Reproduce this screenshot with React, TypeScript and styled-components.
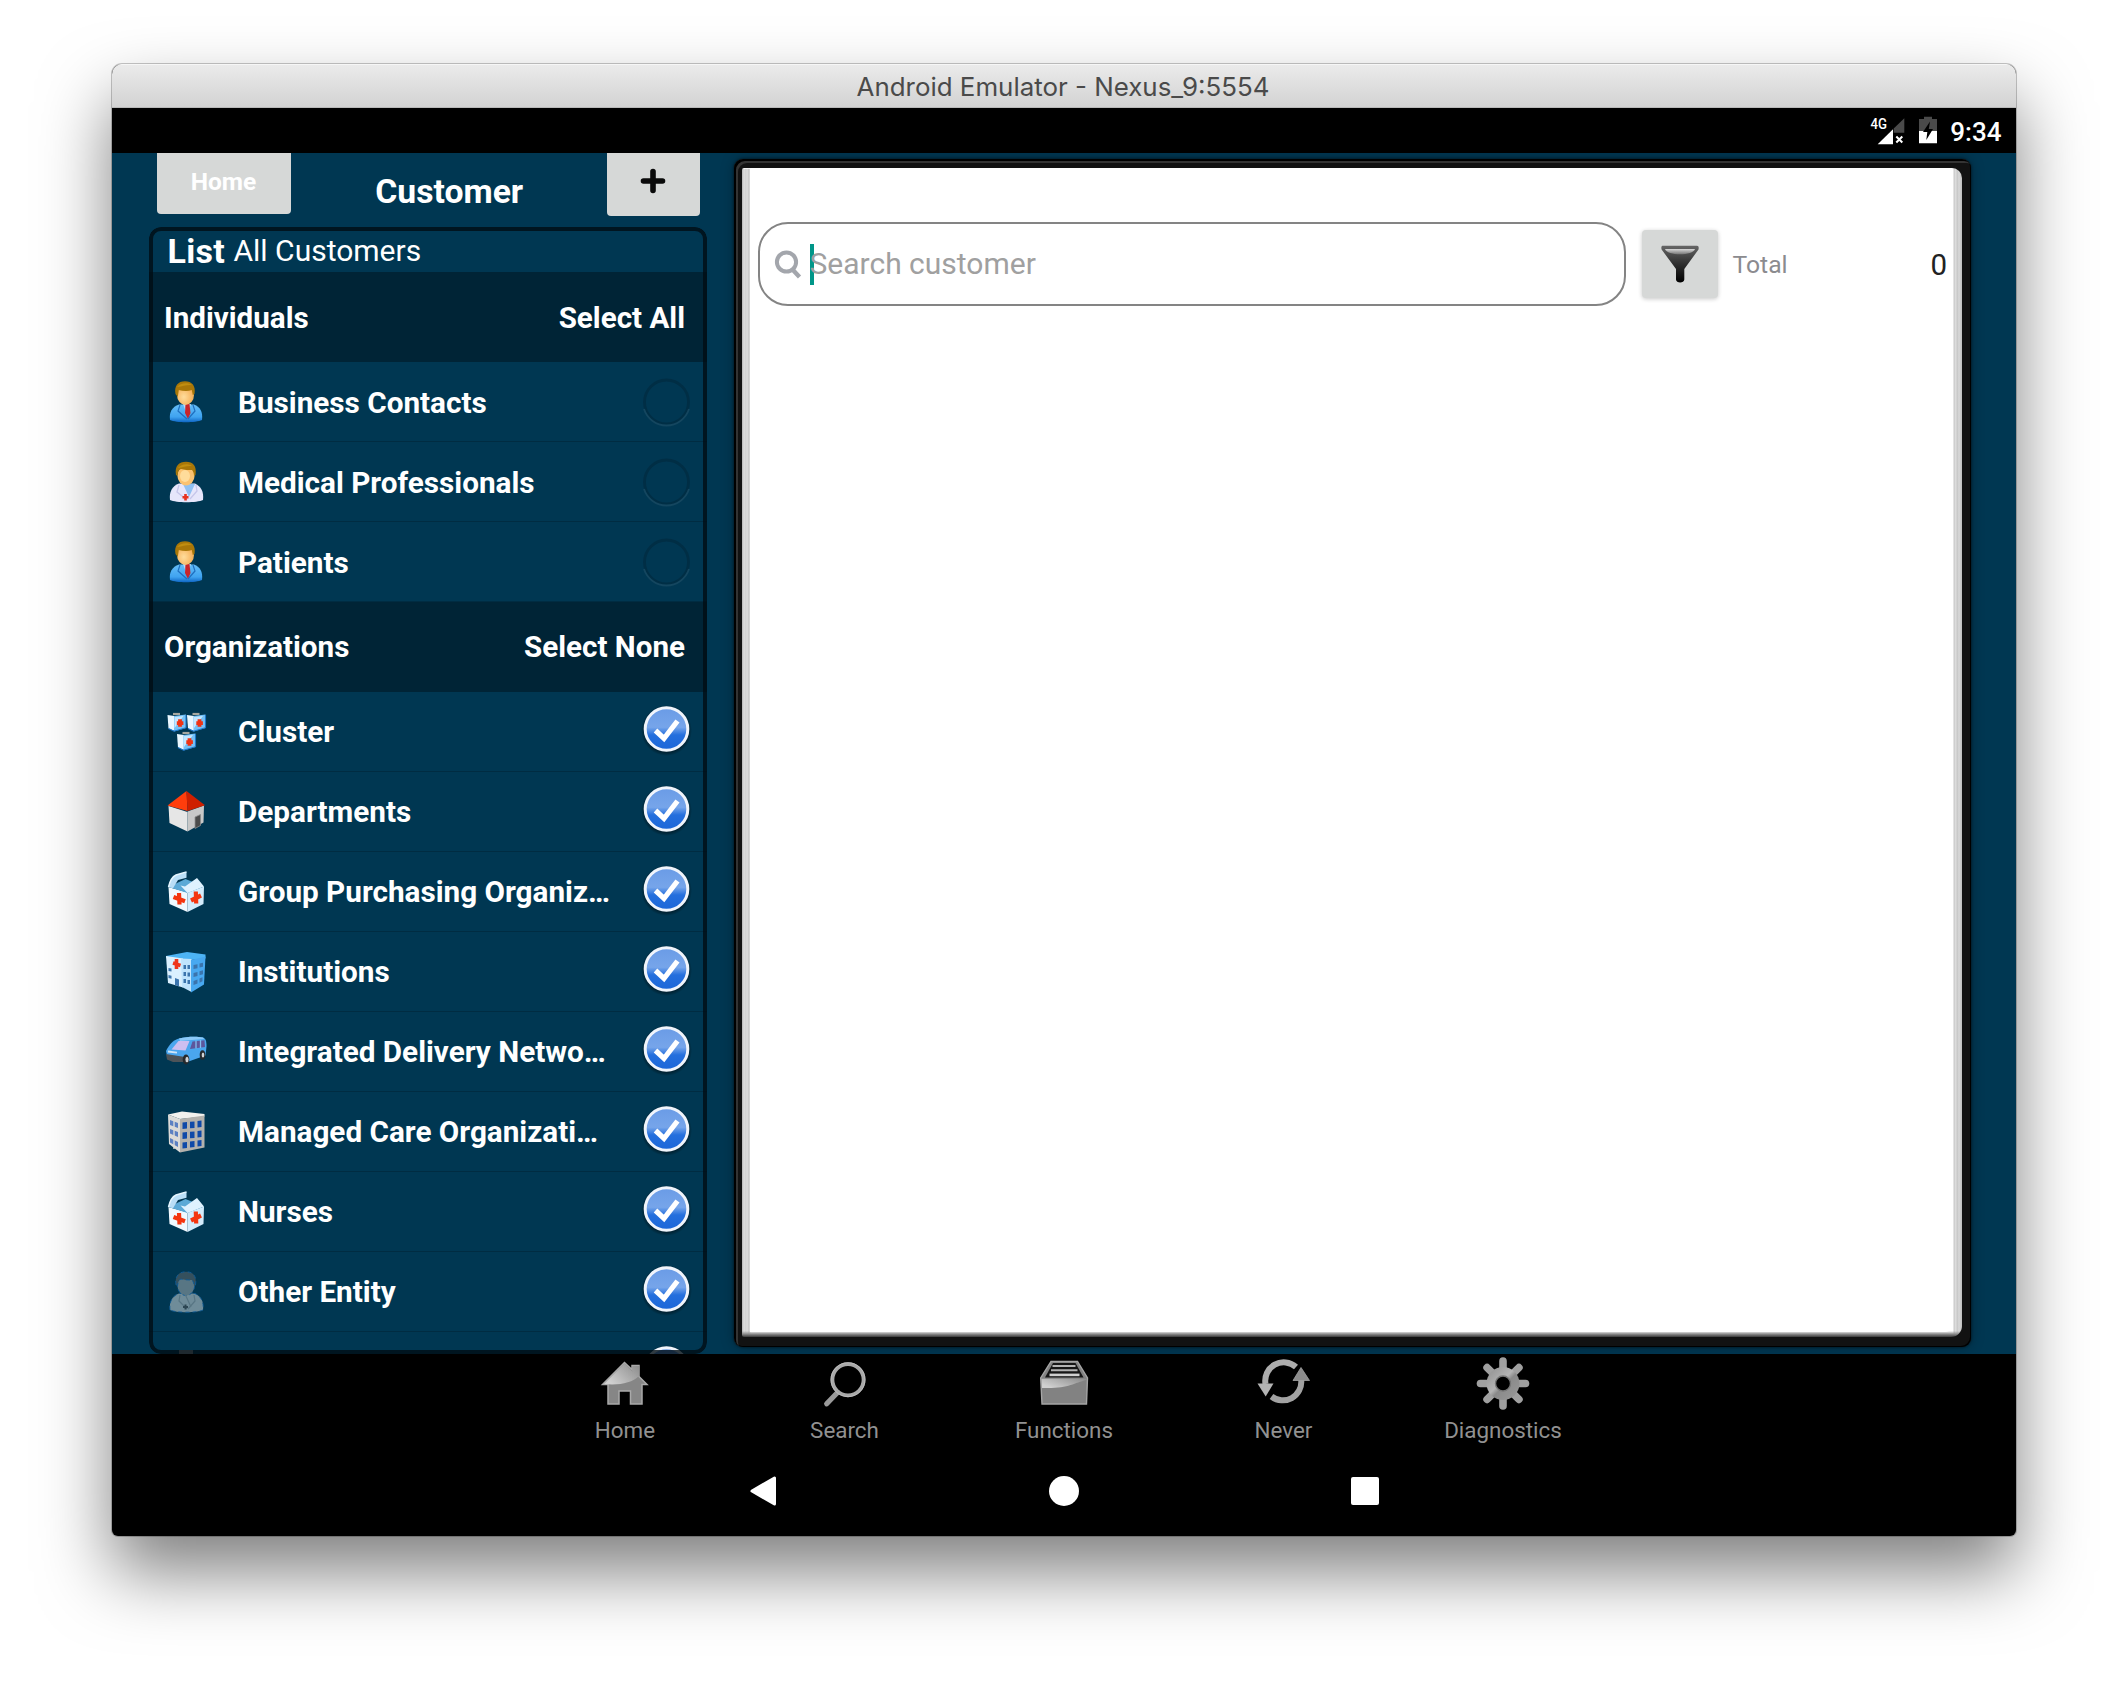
import React from 'react';
import styled, { createGlobalStyle } from 'styled-components';

const GlobalStyle = createGlobalStyle`
  *, *::before, *::after { box-sizing: border-box; }
  body { margin: 0; background: #fff; font-family: Roboto, "Liberation Sans", sans-serif; }
  button { font: inherit; border: 0; padding: 0; margin: 0; background: none; color: inherit; }
  svg { display: block; flex: none; overflow: visible; }
`;

const Desktop = styled.div`
  height: 1696px;
  padding: 64px 112px 0;
  overflow: hidden;
`;

const EmulatorWindow = styled.div`
  display: flex;
  flex-direction: column;
  height: 1472px;
  border-radius: 10px 10px 6px 6px;
  overflow: hidden;
  background: #000;
  box-shadow: 0 0 0 1px rgba(0, 0, 0, 0.22), 0 36px 70px rgba(0, 0, 0, 0.5);
`;

const TitleBar = styled.header`
  flex: none;
  height: 44px;
  padding-right: 2px;
  text-align: center;
  font: 400 25.9px/45px Inter, "Liberation Sans", sans-serif;
  color: #4a4a4a;
  background: linear-gradient(#ebebeb, #d2d2d2);
  box-shadow: inset 0 1px 0 #f6f6f6, inset 0 -1px 0 #b9b9b9;
`;

const StatusBar = styled.div`
  flex: none;
  display: flex;
  justify-content: flex-end;
  height: 45px;
  padding: 0 14.5px 0 0;
  color: #fff;
`;

const Clock = styled.span`
  margin-left: 13px;
  font-weight: 500;
  font-size: 26px;
  line-height: 48px;
`;

const StatusIcon = styled.div<{ gap: number }>`
  padding-top: 7px;
  margin-left: ${p => p.gap}px;
`;

const AppBody = styled.main`
  flex: none;
  display: flex;
  height: 1201px;
  background: #003752;
`;

const Sidebar = styled.aside`
  display: flex;
  flex-direction: column;
  width: 595px;
  padding-left: 37px;
`;

const SidebarHeader = styled.div`
  flex: none;
  display: flex;
  justify-content: space-between;
  align-items: flex-start;
  height: 74px;
  padding: 0 7px 0 7.5px;
`;

const HomeButton = styled.button`
  width: 134px;
  height: 61px;
  border-radius: 0 0 4px 4px;
  background: #d6d8d7;
  color: #fff;
  font-weight: 700;
  font-size: 24.5px;
  line-height: 57px;
  padding-bottom: 4px;
`;

const AddButton = styled.button`
  display: flex;
  justify-content: center;
  width: 93.5px;
  height: 63px;
  padding-top: 15px;
  border-radius: 0 0 4px 4px;
  background: #d6d8d7;
`;

const SidebarTitle = styled.h1`
  margin: 0;
  padding-left: 1.5px;
  color: #fff;
  font-weight: 700;
  font-size: 33.7px;
  line-height: 77px;
`;

const ListPanel = styled.section`
  position: relative;
  flex: 1;
  min-height: 0;
  overflow: hidden;
  border-radius: 12px;
  color: #fff;
  &::after {
    content: '';
    position: absolute;
    inset: 0;
    border: 4px solid rgba(0, 12, 20, 0.8);
    border-radius: 12px;
  }
`;

const ListCaption = styled.div`
  display: flex;
  align-items: flex-start;
  height: 45px;
  padding-left: 18.5px;
`;

const CaptionLabel = styled.strong`
  width: 66px;
  font-weight: 700;
  font-size: 34px;
  line-height: 49px;
  letter-spacing: 0.3px;
`;

const CaptionValue = styled.span`
  font-size: 30px;
  line-height: 48px;
`;

const GroupHeader = styled.div<{ nudge?: number }>`
  display: flex;
  justify-content: space-between;
  height: 90px;
  padding: ${p => p.nudge || 0}px 22px 0 15px;
  background: #002436;
  font-weight: 700;
  font-size: 29.6px;
  line-height: 90px;
`;

const Row = styled.div`
  display: flex;
  height: 80px;
  padding: 0 14px 0 16px;
  border-bottom: 1px solid #002c42;
`;

const RowIcon = styled.div`
  flex: none;
  width: 73px;
  padding-top: 19px;
`;

const RowLabel = styled.span<{ nudge?: number }>`
  flex: none;
  width: 388px;
  padding-top: ${p => p.nudge || 0}px;
  font-weight: 700;
  font-size: 29.7px;
  line-height: 80px;
  white-space: nowrap;
  overflow: hidden;
  text-overflow: ellipsis;
`;

const RowMark = styled.div`
  margin-left: auto;
  padding-top: 10px;
`;

const Notebook = styled.section`
  display: flex;
  width: 1237px;
  height: 1188px;
  margin: 6px 0 0 27px;
  padding: 9px 9px 10px 8px;
  border-radius: 9px;
  background: #121212;
  box-shadow: inset 2px 2px 0 #000, inset 4px 4px 0 #343434, inset -1px -1px 0 #000,
    0 0 3px rgba(0, 0, 0, 0.7), 0 0 14px rgba(0, 0, 0, 0.28);
`;

const PageStack = styled.div`
  flex: 1;
  display: flex;
  padding: 1px 9px 5px 8px;
  border-radius: 2px 10px 11px 2px;
  background:
    linear-gradient(rgba(255,255,255,0.7), rgba(255,255,255,0.7) 1px, transparent 1px),
    linear-gradient(to top, #3a3a3a, #8d8d8d 3px, transparent 6px),
    linear-gradient(90deg, #b5b5b5 0, #dedede 2px, #d0d0d0 4px, #e0e0e0 5px, #c4c4c4 7px, #e6e6e6 8px, #fff 9px,
      #fff 1211px, #c9c9c9 1212px, #e2e2e2 1214px, #c4c4c4 1215px, #d9d9d9 1217px, #bdbdbd 1220px);
`;

const Page = styled.div`
  flex: 1;
  padding: 53px 6px 0 7.5px;
  border-radius: 0 8px 8px 0;
  background: #fff;
`;

const SearchRow = styled.div`
  display: flex;
  align-items: center;
`;

const SearchBox = styled.div`
  flex: none;
  display: flex;
  align-items: center;
  width: 868px;
  height: 84px;
  padding-left: 14px;
  border: 2px solid #848484;
  border-radius: 30px;
  font-size: 30px;
  line-height: 35px;
  color: #a0a0a0;
`;

const Placeholder = styled.span`
  padding-bottom: 1px;
`;

const Caret = styled.i`
  width: 4px;
  height: 41px;
  margin: 0 -4px 0 7px;
  background: #009688;
`;

const FilterButton = styled.button`
  flex: none;
  display: flex;
  align-items: center;
  justify-content: center;
  width: 76px;
  height: 68px;
  margin: 0 14.5px 0 16.5px;
  border-radius: 4px;
  background: #d6d8d7;
  box-shadow: 0 1px 4px rgba(0, 0, 0, 0.22);
`;

const TotalLabel = styled.span`
  font-size: 24.7px;
  color: #8b8b8f;
`;

const TotalValue = styled.span`
  margin-left: auto;
  padding-top: 1px;
  font-size: 29.5px;
  color: #222;
`;

const TabBar = styled.nav`
  flex: none;
  display: grid;
  grid-template-columns: repeat(5, 219.5px);
  justify-content: center;
  height: 92px;
  padding-top: 2px;
`;

const Tab = styled.div`
  display: flex;
  flex-direction: column;
  align-items: center;
  gap: 5px;
  color: #919191;
  font-size: 22.4px;
  line-height: 26px;
`;

const SystemNav = styled.nav`
  flex: none;
  display: grid;
  grid-template-columns: repeat(3, 301px);
  justify-content: center;
  justify-items: center;
  align-items: center;
  height: 90px;
`;

/* ---------- list icons ---------- */

const Svg42 = ({ children }: { children: React.ReactNode }) => (
  <svg width="42" height="42" viewBox="0 0 42 42">{children}</svg>
);

const PersonIcon = () => (
  <Svg42>
    <defs>
      <linearGradient id="suit" x1="0" y1="0" x2="0" y2="1"><stop offset="0" stopColor="#64bdf8" /><stop offset=".7" stopColor="#3fa3f0" /><stop offset="1" stopColor="#0f66c4" /></linearGradient>
      <radialGradient id="face" cx=".4" cy=".6" r=".7"><stop offset="0" stopColor="#ffdc9b" /><stop offset="1" stopColor="#f3a548" /></radialGradient>
    </defs>
    <path d="M5 39C4 31 7 26 14 23.500h15c6 2.500 9 7 8 15.500c-6 3-26 3-32 0z" fill="url(#suit)" />
    <path d="M18 23l4 11 4-11z" fill="#b5dcfa" />
    <path d="M20.500 23h4l1 9-2.500 6-3-6z" fill="#c9252b" />
    <path d="M15 24l-2 6 9 8M28 24l2 6-7 8" fill="none" stroke="#1f6fc0" strokeWidth="1.200" />
    <ellipse cx="20.500" cy="14" rx="8.500" ry="10" fill="url(#face)" />
    <path d="M10.500 13C9 5 13 .3 20 .3S31 5 29.500 13l-1.700 1-1-5c-4 1.500-9 1-13 0l-1 7z" fill="#a87708" />
    <path d="M12 6c3-4 11-5 15-2-5-.5-9 1-15 2z" fill="#c08e10" />
  </Svg42>
);

const DoctorIcon = () => (
  <Svg42>
    <path d="M5 39C4 31 7 25 14 22.500h16c6 3 9 8 8 16.500c-6 3-27 3-33 0z" fill="#e6e6fb" />
    <path d="M18 23l6 13 6-13z" fill="#8fc0f2" />
    <path d="M14 24l-2 7 10 8M31 24l1 6-7 8" fill="none" stroke="#c6c6ea" strokeWidth="1.300" />
    <path d="M20.500 33v6.500M17.500 36.300h6" stroke="#e8331f" strokeWidth="2.600" />
    <ellipse cx="21" cy="14.500" rx="8.600" ry="10" fill="#fbc270" />
    <ellipse cx="20" cy="15" rx="5" ry="6" fill="#ffdc9b" />
    <path d="M11 14C9.500 5 14 .8 21 .8S32 5 30.500 14l-1.500 1c0-3-1-5-2-6-3 0-8 0-11-1-3 1-3 4-3.500 7z" fill="#a87708" />
    <path d="M13 7c3-4 10-5 14-2-5-.5-9 1-14 2z" fill="#c08e10" />
  </Svg42>
);

const EntityIcon = () => (
  <Svg42>
    <g stroke="#0d5a96" strokeWidth=".9" strokeDasharray="4 3">
      <path d="M5 39C4 31 7 25 14 22.500h16c6 3 9 8 8 16.500c-6 3-27 3-33 0z" fill="#6f8c99" />
      <ellipse cx="21" cy="14.500" rx="8.600" ry="10" fill="#587684" />
      <path d="M11 14C9.500 5 14 .8 21 .8S32 5 30.500 14l-1.500 1c0-3-1-5-2-6-3 0-8 0-11-1-3 1-3 4-3.500 7z" fill="#35505d" />
    </g>
    <path d="M15 24l-1 6 8 8M29 24l1 6-7 8M20 23l6 13" fill="none" stroke="#587684" strokeWidth="1.200" />
    <path d="M20.500 33.500v5M18 36h5" stroke="#2c4653" strokeWidth="2" />
  </Svg42>
);

const KitBox = ({ x, y }: { x: number; y: number }) => (
  <g transform={`translate(${x} ${y})`}>
    <path d="M6 1.500h7" stroke="#a8a8a0" strokeWidth="2.200" />
    <path d="M.5 2.500l7 1v15l-6-2.500z" fill="#eaf7ff" />
    <path d="M7 3.500l12-1.500v13.500l-12 3.500z" fill="#74c0f6" />
    <path d="M1.500 16l5.500 2.700 12-3.500V2.500" fill="none" stroke="#1c77cc" strokeWidth="1.100" />
    <path d="M7.500 4.500l9-1-9 12z" fill="#c4e7ff" />
    <path d="M13 6.800v7.400M9.800 10.700h6.600" stroke="#f03314" strokeWidth="3.800" />
  </g>
);

const ClusterIcon = () => (
  <Svg42>
    <KitBox x={2} y={1.500} />
    <KitBox x={21.500} y={1.500} />
    <KitBox x={11.500} y={20.500} />
  </Svg42>
);

const HouseIcon = () => (
  <Svg42>
    <path d="M3.500 15l19 6v19.500L4.500 32z" fill="#e6e6e6" />
    <path d="M22.500 20.500L39 14.500l-.5 17-16 9z" fill="#c8c8c8" />
    <path d="M30 26l5.500-2.500v11L30 37.500z" fill="#4b4b4b" stroke="#8d8d8d" strokeWidth=".8" />
    <path d="M21.500 0L2.500 14.500l20 5.500z" fill="#ff3d0c" />
    <path d="M21.500 0L40 14.300 22.500 20z" fill="#cf1f00" />
  </Svg42>
);

const FirstAidIcon = () => (
  <Svg42>
    <path d="M3.500 16l19 5.500v19.500L4.500 33z" fill="#f0f9ff" />
    <path d="M22.500 21.500L39 15.500l-.5 17.500-16 8z" fill="#d3ecfc" />
    <path d="M3.500 16l17-8 18.500 7.500L22.500 22z" fill="#5ba9d6" />
    <path d="M3.500 16C5 9 8 5.500 11 4L21.500.8v6L13 9l-5 8.200z" fill="#b9def6" />
    <path d="M3.500 16C5 9 8 5.500 11 4L21.500.8" fill="none" stroke="#e6f6ff" strokeWidth="1.400" />
    <path d="M15.500 14.500L20 15.500 32 7l7 8.500L22.500 22z" fill="#dff2ff" />
    <path d="M14 22l.5 11.500M8.500 26l11.500 4.200" stroke="#f4350f" strokeWidth="4.200" />
    <path d="M30.800 20.500l.4 12M26 29.500l10-5" stroke="#f4350f" strokeWidth="4.200" />
  </Svg42>
);

const HospitalIcon = () => (
  <Svg42>
    <path d="M1 5l21-4 18.500 2.500v4L26 9 1 7z" fill="#4db4f5" />
    <path d="M1 5l17 2.500v29L3 32z" fill="#daf0ff" />
    <path d="M16 7.500l10.500.5v33L17 36z" fill="#c0e4fd" />
    <path d="M26 9l14.500-3.500L39 33.500 26 41.500z" fill="#48a8f0" />
    <path d="M11.500 8v10M8 12l7.500 2.500" stroke="#ee351c" strokeWidth="3.600" />
    <g fill="#3b74ad">
      <path d="M3.500 17l3 .5v3l-3-.5zM3.500 24l3 .8v3l-3-.8zM10 27l4 1.500v7l-4-1.500z" />
      <path d="M18.500 14h2.500v4h-2.500zM22.500 14h2.500v4h-2.500zM18.500 21h2.500v4h-2.500zM22.500 21.500h2.500v4h-2.500zM18.500 28h2.500v4h-2.500zM22.500 29h2.500v4h-2.500z" />
      <path d="M28.500 14l4-.8v4l-4 .8zM34.500 12.500l3.500-.8v4l-3.500.8zM28.500 22l4-1v4l-4 1zM34.500 20.200l3.500-1v4l-3.500 1zM28.500 30l4-1.500v4l-4 1.500zM34.500 27.500l3-1.200v4l-3 1.500z" />
    </g>
  </Svg42>
);

const VanIcon = () => (
  <Svg42>
    <path d="M1 20C4 14 8 9 14 7.500C22 5.500 32 5.500 38 6.500c3 1 3.500 4 3.500 9l-1 9-17 6-21-4z" fill="#4aa6ee" />
    <path d="M14 7.500C22 5.500 32 5.500 38 6.500l1 1.500-24 2z" fill="#8cc9f8" />
    <path d="M6.500 18.500l7-8.500h11l-4 9.500z" fill="#cdbff0" />
    <path d="M25 18l2.500-7.500 12-1.200.5 6.700z" fill="#5d569c" />
    <path d="M31 9.500v8M35.500 9v8" stroke="#82bdf0" strokeWidth="1.300" />
    <path d="M1 23l19 3v5L8 31l-6-2.500z" fill="#4d5358" />
    <ellipse cx="21" cy="28.500" rx="3.300" ry="5" fill="#26292c" />
    <ellipse cx="22" cy="28.500" rx="1.600" ry="2.800" fill="#cfd3d6" />
    <ellipse cx="37.500" cy="24" rx="2.800" ry="4.800" fill="#26292c" />
    <ellipse cx="38" cy="24" rx="1.300" ry="2.500" fill="#cfd3d6" />
    <path d="M3 20.500l9 1.200" stroke="#cfe6f8" strokeWidth="1.800" />
  </Svg42>
);

const OfficeIcon = () => (
  <Svg42>
    <path d="M3 3.500L17 .5 39.500 3v2.500L15 8z" fill="#f2f1ee" />
    <path d="M3 3.500L15 8v33.500L4 33z" fill="#dcdbd8" />
    <path d="M15 8l24.500-3.500v32L15 41.500z" fill="#b3b1ad" />
    <path d="M5 9l8 3v5l-8-3zM5 18l8 3v5l-8-3.500zM5 27l8 4v5l-8-4.500z" fill="#5c80c2" />
    <path d="M9 8v30" stroke="#dcdbd8" strokeWidth="1.400" />
    <g fill="#0f49a8">
      <path d="M17.500 11.500l4.500-.4v6.500l-4.500.4zM25 10.800l4.500-.4v6.500l-4.500.4zM32.500 10l4-.4v6.500l-4 .4z" />
      <path d="M17.500 21.500l4.500-.4v6.500l-4.500.4zM25 20.800l4.500-.4v6.500l-4.500.4zM32.500 20l4-.4v6.500l-4 .4z" />
      <path d="M17.500 31.500l4.500-.6v6l-4.500.6zM25 30.500l4.500-.6v6l-4.500.6zM32.500 29.500l4-.6v6l-4 .6z" />
    </g>
  </Svg42>
);

const CabinetIcon = () => (
  <Svg42>
    <path d="M14 -1h14v11h8v30H6V10h8z" fill="#9c9c9c" />
  </Svg42>
);

const CheckMark = () => (
  <svg width="54" height="58" viewBox="0 0 54 58">
    <defs>
      <linearGradient id="disc" x1="0" y1="0" x2="0" y2="1"><stop offset="0" stopColor="#6a9be6" /><stop offset=".46" stopColor="#76a5ea" /><stop offset=".64" stopColor="#246fdd" /><stop offset="1" stopColor="#1c66d8" /></linearGradient>
      <radialGradient id="discShade"><stop offset=".85" stopColor="#000" stopOpacity=".4" /><stop offset="1" stopColor="#000" stopOpacity="0" /></radialGradient>
    </defs>
    <circle cx="27.500" cy="28.500" r="25.500" fill="url(#discShade)" />
    <circle cx="27.500" cy="27" r="21.300" fill="url(#disc)" stroke="#f0f4fb" strokeWidth="3" />
    <path d="M16.500 28.500l8.500 8L38.500 19" fill="none" stroke="#fff" strokeWidth="5.200" />
  </svg>
);

const EmptyMark = () => (
  <svg width="54" height="58" viewBox="0 0 54 58">
    <circle cx="27.500" cy="30" r="22" fill="none" stroke="#002e45" strokeWidth="2.800" />
    <path d="M5 37a23.600 23.600 0 0 0 45 0" fill="none" stroke="#14465f" strokeWidth="1.800" />
  </svg>
);

/* ---------- tab icons ---------- */

const Metal = () => (
  <defs>
    <linearGradient id="metal" x1="0" y1="0" x2="1" y2="1">
      <stop offset="0" stopColor="#8e8e8e" /><stop offset=".45" stopColor="#b4b4b4" /><stop offset=".55" stopColor="#8a8a8a" /><stop offset="1" stopColor="#9b9b9b" />
    </linearGradient>
    <linearGradient id="gloss" x1="1" y1="0" x2="0" y2=".6">
      <stop offset="0" stopColor="#8a8a8a" /><stop offset="1" stopColor="#d0d0d0" />
    </linearGradient>
  </defs>
);

const Svg56 = ({ children }: { children: React.ReactNode }) => (
  <svg width="56" height="56" viewBox="0 0 56 56"><Metal />{children}</svg>
);

const TabHomeIcon = () => (
  <Svg56>
    <path d="M27.500 6.500L5.500 28.500H11V48H22V35H33.500V48H45V28.500H50L42 20.500V9.500H35V13.500Z" fill="#868686" stroke="#a9a9a9" strokeWidth="1.500" />
    <path d="M27.500 7.500L7 28c15 1.500 28-1 35-8V10h-6.500v5.500z" fill="url(#gloss)" />
  </Svg56>
);

const TabSearchIcon = () => (
  <Svg56>
    <path d="M20.500 36.500L9.700 47.800" stroke="#9a9a9a" strokeWidth="5.200" strokeLinecap="round" />
    <circle cx="31" cy="23.700" r="15.600" fill="none" stroke="#a9a9a9" strokeWidth="3.800" />
    <circle cx="31" cy="23.700" r="17" fill="none" stroke="#c2c2c2" strokeWidth=".8" />
  </Svg56>
);

const TabFunctionsIcon = () => (
  <Svg56>
    <path d="M15 5.500H41.500L51.500 22L50.500 48H6L4.700 22Z" fill="#828282" stroke="#a5a5a5" strokeWidth="1.400" />
    <path d="M17 7H39.500L47.500 21.500H9Z" fill="#161616" />
    <path d="M16.500 10h23M15 14.300h26.500" stroke="#b4b4b4" strokeWidth="2" />
    <path d="M13.500 18.900h30" stroke="#d0d0d0" strokeWidth="2.600" />
    <path d="M5.500 22.700H50.700L50 24C38 27 32 33 6 32Z" fill="url(#gloss)" />
  </Svg56>
);

const TabSyncIcon = () => (
  <Svg56>
    <path d="M40 11A18.500 18.500 0 0 0 9.500 28" fill="none" stroke="#adadad" strokeWidth="6" />
    <path d="M1.500 27.500H17.500L9.700 40.500Z" fill="#b4b4b4" />
    <path d="M15.500 40.500A18.500 18.500 0 0 0 45.200 24" fill="none" stroke="#a2a2a2" strokeWidth="6" />
    <path d="M37 24.500H53.500L45 11.500Z" fill="#8c8c8c" stroke="#a2a2a2" strokeWidth=".8" />
  </Svg56>
);

const TabGearIcon = () => (
  <Svg56>
    {[0, 45, 90, 135].map(a => (
      <path key={a} d="M28 5L28 50" stroke="#a0a0a0" strokeWidth="7.600" strokeLinecap="round" transform={`rotate(${a} 28 27.500)`} />
    ))}
    <circle cx="28" cy="27.500" r="16.500" fill="url(#metal)" />
    <circle cx="28" cy="27.500" r="7.500" fill="#000" stroke="#777" strokeWidth="1.400" />
  </Svg56>
);

/* ---------- data ---------- */

type Item = { label: string; icon: React.ReactNode; on: boolean };

const individuals: Item[] = [
  { label: 'Business Contacts', icon: <PersonIcon />, on: false },
  { label: 'Medical Professionals', icon: <DoctorIcon />, on: false },
  { label: 'Patients', icon: <PersonIcon />, on: false },
];

const organizations: Item[] = [
  { label: 'Cluster', icon: <ClusterIcon />, on: true },
  { label: 'Departments', icon: <HouseIcon />, on: true },
  { label: 'Group Purchasing Organiz…', icon: <FirstAidIcon />, on: true },
  { label: 'Institutions', icon: <HospitalIcon />, on: true },
  { label: 'Integrated Delivery Netwo…', icon: <VanIcon />, on: true },
  { label: 'Managed Care Organizati…', icon: <OfficeIcon />, on: true },
  { label: 'Nurses', icon: <FirstAidIcon />, on: true },
  { label: 'Other Entity', icon: <EntityIcon />, on: true },
  { label: '', icon: <CabinetIcon />, on: true },
];

const tabs = [
  { label: 'Home', icon: <TabHomeIcon /> },
  { label: 'Search', icon: <TabSearchIcon /> },
  { label: 'Functions', icon: <TabFunctionsIcon /> },
  { label: 'Never', icon: <TabSyncIcon /> },
  { label: 'Diagnostics', icon: <TabGearIcon /> },
];

const Group = ({ title, action, items, nudge }: { title: string; action: string; items: Item[]; nudge?: number }) => (
  <>
    <GroupHeader nudge={nudge}><span>{title}</span><span>{action}</span></GroupHeader>
    {items.map((item, i) => (
      <Row key={i}>
        <RowIcon>{item.icon}</RowIcon>
        <RowLabel nudge={nudge}>{item.label}</RowLabel>
        <RowMark>{item.on ? <CheckMark /> : <EmptyMark />}</RowMark>
      </Row>
    ))}
  </>
);

export default function App() {
  return (
    <Desktop>
      <GlobalStyle />
      <EmulatorWindow>
        <TitleBar>Android Emulator - Nexus_9:5554</TitleBar>
        <StatusBar>
          <StatusIcon gap={0}>
            <svg width="35" height="31" viewBox="0 0 35 31">
              <text x="0.500" y="13.700" fill="#fff" fontFamily="Roboto" fontWeight="500" fontSize="15" textLength="16.500" lengthAdjust="spacingAndGlyphs">4G</text>
              <path d="M7.700 29.300L23 14.300V29.300Z" fill="#fff" />
              <path d="M23.700 13.600L34.300 3.300V17.700H23.700Z" fill="#4a4a4a" />
              <path d="M26.300 21.500l6 6M32.300 21.500l-6 6" stroke="#fff" strokeWidth="2" />
            </svg>
          </StatusIcon>
          <StatusIcon gap={14}>
            <svg width="18" height="31" viewBox="0 0 18 31">
              <path d="M5 1.700h8V4h5v12H0V4h5z" fill="#4a4a4a" />
              <path d="M0 16h18v12.300H0z" fill="#fff" />
              <path d="M11 6.500L4 17h4.300L7.300 25 14 14H9.800z" fill="#000" />
            </svg>
          </StatusIcon>
          <Clock>9:34</Clock>
        </StatusBar>
        <AppBody>
          <Sidebar>
            <SidebarHeader>
              <HomeButton>Home</HomeButton>
              <SidebarTitle>Customer</SidebarTitle>
              <AddButton>
                <svg width="26" height="26" viewBox="0 0 26 26">
                  <path d="M13 3.500v19M3.500 13h19" stroke="#0a0a0a" strokeWidth="5.600" strokeLinecap="round" />
                </svg>
              </AddButton>
            </SidebarHeader>
            <ListPanel>
              <ListCaption>
                <CaptionLabel>List</CaptionLabel>
                <CaptionValue>All Customers</CaptionValue>
              </ListCaption>
              <Group title="Individuals" action="Select All" items={individuals} nudge={1} />
              <Group title="Organizations" action="Select None" items={organizations} />
            </ListPanel>
          </Sidebar>
          <Notebook>
            <PageStack>
              <Page>
                <SearchRow>
                  <SearchBox>
                    <svg width="29" height="30" viewBox="0 0 29 30">
                      <circle cx="12.500" cy="13" r="9.600" fill="none" stroke="#a3a6ac" strokeWidth="4" />
                      <path d="M18.500 20.500L25.500 28" stroke="#a3a6ac" strokeWidth="4.400" />
                    </svg>
                    <Caret />
                    <Placeholder>Search customer</Placeholder>
                  </SearchBox>
                  <FilterButton>
                    <svg width="38" height="38" viewBox="0 0 38 38">
                      <defs>
                        <linearGradient id="funnel" x1="0" y1="0" x2="0" y2="1"><stop offset="0" stopColor="#666" /><stop offset=".5" stopColor="#2e2e2e" /><stop offset="1" stopColor="#000" /></linearGradient>
                        <linearGradient id="rim" x1="0" y1="0" x2="0" y2="1"><stop offset="0" stopColor="#d8d8d8" /><stop offset="1" stopColor="#777" /></linearGradient>
                      </defs>
                      <path d="M2 .8H36C37.500.8 38 2 37.500 4.500L23.300 24V34.500C23.300 38.500 15 38.500 15 34.500V24L.6 4.500C0 2 .5.8 2 .8Z" fill="url(#funnel)" />
                      <path d="M4 4H34C32 11 6 11 4 4Z" fill="url(#rim)" />
                    </svg>
                  </FilterButton>
                  <TotalLabel>Total</TotalLabel>
                  <TotalValue>0</TotalValue>
                </SearchRow>
              </Page>
            </PageStack>
          </Notebook>
        </AppBody>
        <TabBar>
          {tabs.map(t => (
            <Tab key={t.label}>{t.icon}<span>{t.label}</span></Tab>
          ))}
        </TabBar>
        <SystemNav>
          <svg width="27" height="30" viewBox="0 0 27 30">
            <path d="M2 15L24.500 2V28Z" fill="#fff" stroke="#fff" strokeWidth="3" strokeLinejoin="round" />
          </svg>
          <svg width="30" height="30" viewBox="0 0 30 30"><circle cx="15" cy="15" r="15" fill="#fff" /></svg>
          <svg width="28" height="28" viewBox="0 0 28 28"><rect width="28" height="28" rx="2" fill="#fff" /></svg>
        </SystemNav>
      </EmulatorWindow>
    </Desktop>
  );
}
